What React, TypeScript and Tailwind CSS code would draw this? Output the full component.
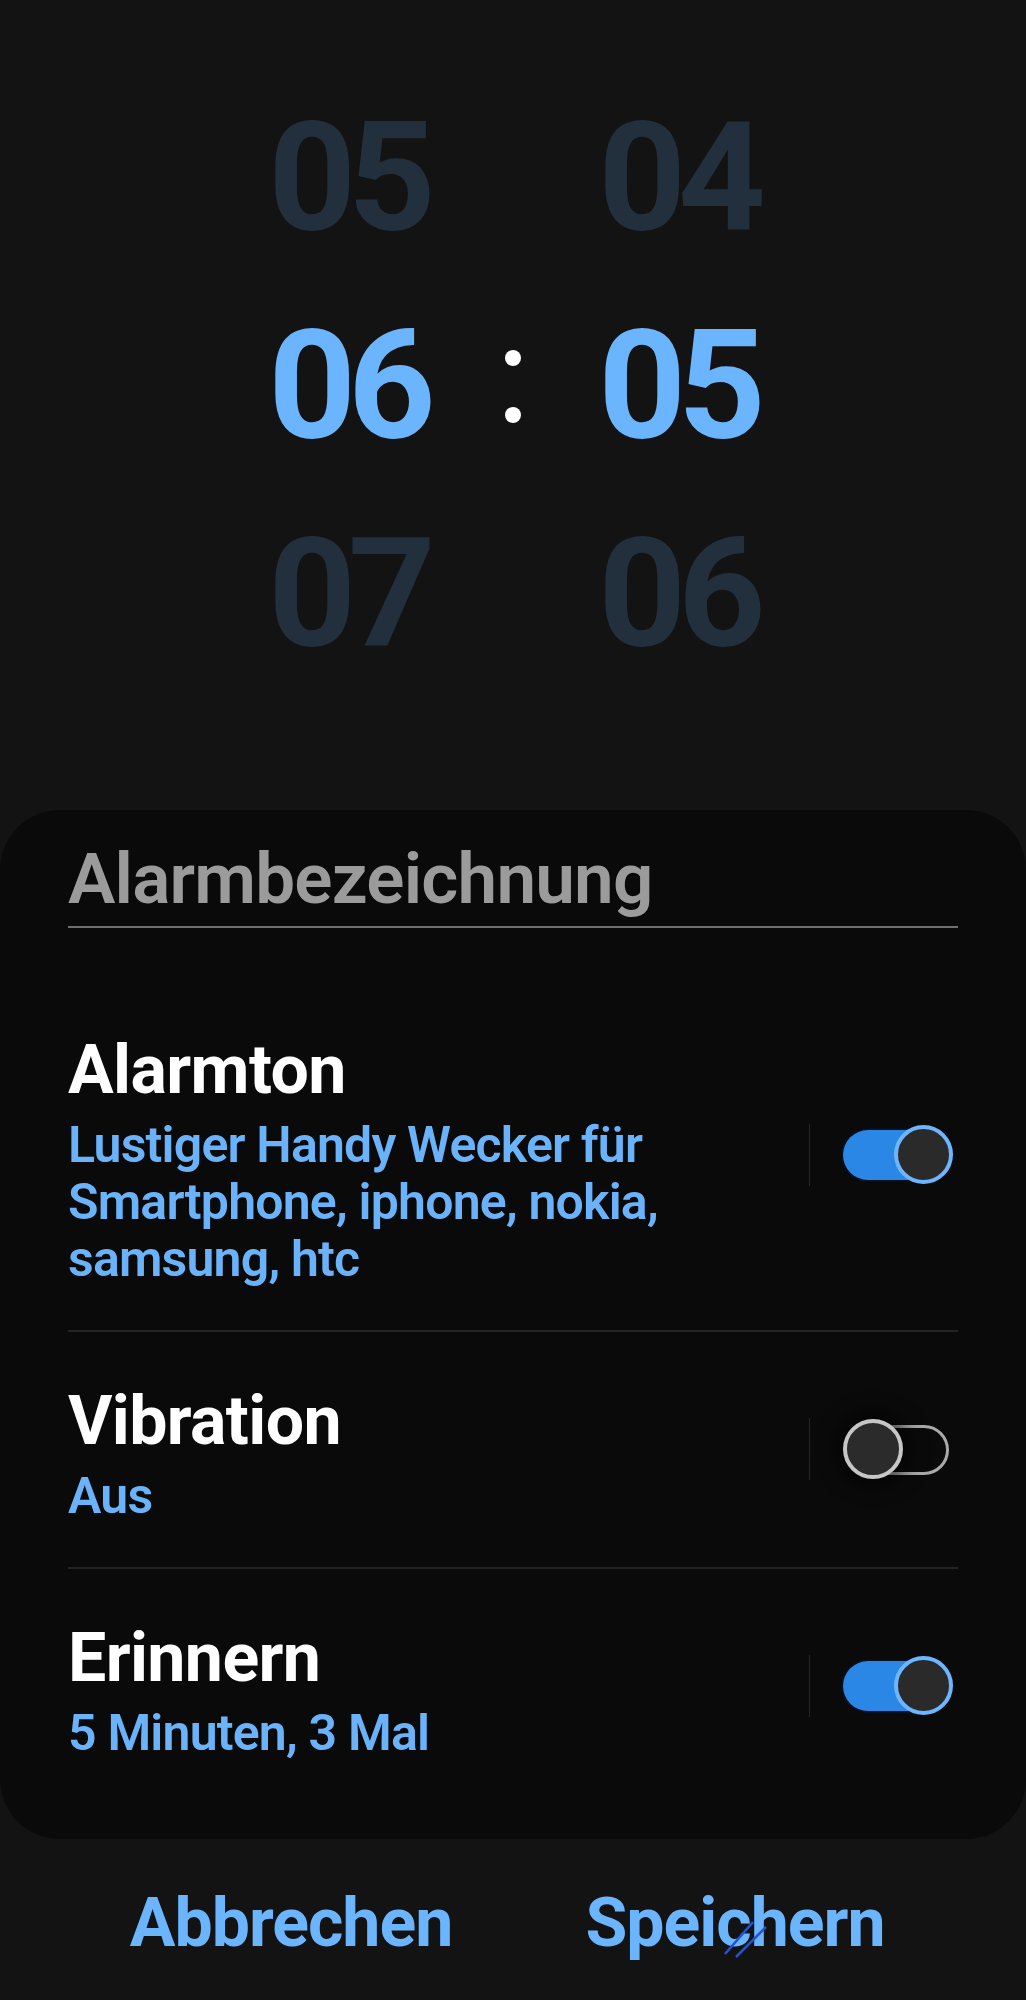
import React from 'react';

type Row = {
  title: string;
  subtitle: string;
  on: boolean;
};

const rows: Row[] = [
  { title: 'Alarmton', subtitle: 'Lustiger Handy Wecker für Smartphone, iphone, nokia, samsung, htc', on: true },
  { title: 'Vibration', subtitle: 'Aus', on: false },
  { title: 'Erinnern', subtitle: '5 Minuten, 3 Mal', on: true },
];

const Toggle: React.FC<{ on: boolean }> = ({ on }) => {
  if (on) {
    return (
      <div className="relative w-[110px] h-[60px]">
        <div className="absolute left-0 top-[5px] w-[100px] h-[50px] rounded-full bg-[#2b87e6] ring-2 ring-[#04101f]" />
        <div className="absolute right-0 top-0 w-[59px] h-[59px] rounded-full border-4 border-[#6db6ff] bg-[#2a2a2a]" />
      </div>
    );
  }
  return (
    <div className="relative w-[110px] h-[60px]">
      <div className="absolute left-[22px] top-[6px] w-[84px] h-[50px] rounded-full border-[3px] border-[#a9a9a9]" />
      <div className="absolute left-0 top-0 w-[60px] h-[60px] rounded-full border-4 border-[#c6c6c6] bg-[#2b2b2b] shadow-[0_0_18px_8px_rgba(0,0,0,0.6)]" />
    </div>
  );
};

const DigitColumn: React.FC<{ values: string[] }> = ({ values }) => (
  <div className="flex flex-col items-center w-[170px]">
    {values.map((v, i) => (
      <div
        key={v + i}
        className={`text-[153px] leading-[208px] font-bold tracking-[-8px] ${i === 1 ? 'text-[#6bb5ff]' : 'text-[#22303e]'}`}
      >
        {v}
      </div>
    ))}
  </div>
);

export default function App() {
  return (
    <div className="min-h-[2000px] w-full bg-[#131313] font-['Roboto','Liberation_Sans',sans-serif] flex flex-col">
      {/* time picker */}
      <div className="h-[810px] pt-[74px] flex justify-center">
        <DigitColumn values={['05', '06', '07']} />
        <div className="w-[160px] h-[624px] flex flex-col items-center justify-center gap-[41px]">
          <div className="w-4 h-4 rounded-full bg-white" />
          <div className="w-4 h-4 rounded-full bg-white" />
        </div>
        <DigitColumn values={['04', '05', '06']} />
      </div>

      {/* settings card */}
      <div className="bg-[#0a0a0a] rounded-[60px] px-[68px] pt-[26px] pb-[35px]">
        <div className="text-[71px] leading-[85px] font-semibold text-[#9b9b9b] tracking-[-0.8px]">Alarmbezeichnung</div>
        <div className="mt-[5px] h-[2px] bg-[#6f6f6f]" />

        <div className="mt-[53px]">
          {rows.map((row, i) => (
            <div
              key={row.title}
              className={`flex items-center pt-[52px] pb-[42px] ${i < rows.length - 1 ? 'border-b-2 border-[#232323]' : ''}`}
            >
              <div className="flex-1 pr-[40px]">
                <div className="text-[68px] leading-[75px] font-bold text-white tracking-[-0.6px]">{row.title}</div>
                <div className="mt-[9px] text-[50px] leading-[57px] font-semibold text-[#6ab3fb] max-w-[615px] tracking-[-0.8px]">
                  {row.subtitle}
                </div>
              </div>
              <div className="flex items-center mb-[12px] mr-[5px]">
                <div className="w-px h-[62px] bg-[#262626] mr-[33px]" />
                <Toggle on={row.on} />
              </div>
            </div>
          ))}
        </div>
      </div>

      {/* buttons */}
      <div className="flex px-[69px] mt-[44px]">
        <button className="flex-1 text-[68px] leading-[80px] font-bold text-[#6bb5ff] tracking-[-1px]">Abbrechen</button>
        <button className="flex-1 text-[68px] leading-[80px] font-bold text-[#6bb5ff] tracking-[-1px]">
          <span className="relative">
            Speichern
            <svg className="absolute left-[138px] top-[38px]" width="46" height="40" viewBox="0 0 46 40" fill="none">
              <path d="M2 33 L30 1" stroke="#2352d4" strokeWidth="2.5" />
              <path d="M13 36 L43 6" stroke="#2352d4" strokeWidth="2.5" />
            </svg>
          </span>
        </button>
      </div>
    </div>
  );
}
